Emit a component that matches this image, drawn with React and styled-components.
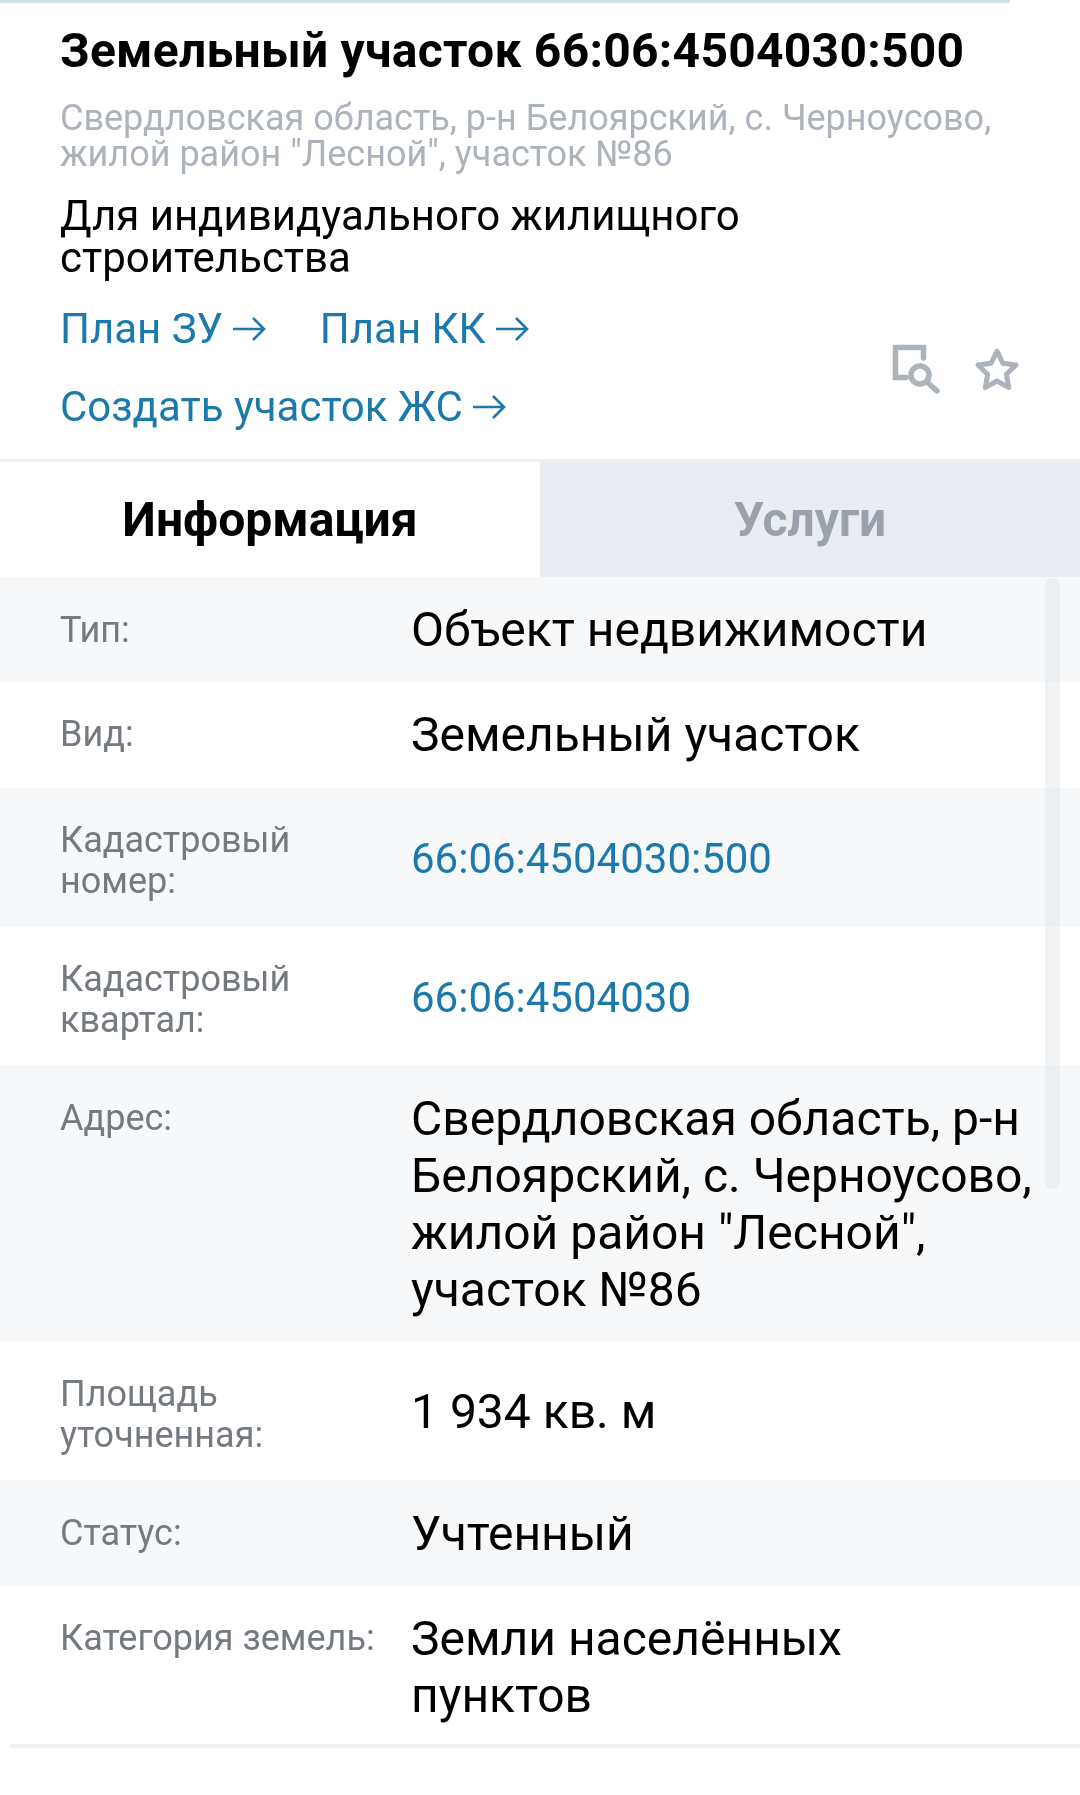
import React from 'react';
import styled, { createGlobalStyle } from 'styled-components';

const GlobalStyle = createGlobalStyle`
  html, body {
    margin: 0;
    padding: 0;
    background: #fff;
  }
  body {
    font-family: Roboto, "Liberation Sans", sans-serif;
    color: #000;
  }
`;

const Page = styled.div`
  position: relative;
  width: 1080px;
  height: 1795px;
  overflow: hidden;
  background: #fff;
  filter: blur(0.5px);
`;

const TopLine = styled.div`
  height: 3px;
  width: 1010px;
  background: #d5e2e8;
`;

const Header = styled.div`
  height: 459px;
  box-sizing: border-box;
  padding: 22px 60px 0;
  border-bottom: 3px solid #eef0f3;
`;

const Title = styled.h1`
  margin: 0;
  font-size: 48px;
  line-height: 52px;
  font-weight: 700;
  letter-spacing: 0.26px;
  white-space: nowrap;
`;

const Address = styled.div`
  margin-top: 23px;
  font-size: 36px;
  line-height: 36px;
  color: #adb3bb;
  white-space: nowrap;
`;

const Purpose = styled.div`
  margin-top: 23px;
  font-size: 42px;
  line-height: 42px;
`;

const HeaderBottom = styled.div`
  display: flex;
  justify-content: space-between;
  align-items: center;
  margin-top: 28px;
`;

const Links = styled.div`
  display: flex;
  flex-wrap: wrap;
  column-gap: 54px;
  row-gap: 34px;
  width: 560px;
`;

const LinkItem = styled.a`
  display: inline-flex;
  align-items: center;
  gap: 9px;
  font-size: 42px;
  line-height: 44px;
  color: #1b79ac;
  white-space: nowrap;
`;

const Actions = styled.div`
  display: flex;
  gap: 33px;
  align-items: center;
  margin-top: 4px;
`;

const Tabs = styled.div`
  display: grid;
  grid-template-columns: 540px 540px;
  height: 115px;
`;

const Tab = styled.div`
  display: flex;
  align-items: center;
  justify-content: center;
  font-size: 48px;
  font-weight: 700;
  background: ${(props) => (props.active ? '#fff' : '#e9ecf1')};
  color: ${(props) => (props.active ? '#000' : '#9aa1ab')};
`;

const Table = styled.div`
  position: relative;
`;

const Row = styled.div`
  display: grid;
  grid-template-columns: 351px 1fr;
  box-sizing: border-box;
  height: ${(props) => props.h}px;
  padding: 0 30px 0 60px;
  background: ${(props) => (props.odd ? '#f6f8fa' : '#fff')};
`;

const Label = styled.div`
  padding-top: ${(props) => props.top}px;
  font-size: 36px;
  line-height: 41px;
  color: #757a80;
  white-space: pre-line;
`;

const Value = styled.div`
  padding-top: ${(props) => props.top}px;
  font-size: 48px;
  line-height: 57px;
  white-space: pre-line;
`;

const NumberLink = styled.div`
  padding-top: ${(props) => props.top}px;
  font-size: 42px;
  line-height: 57px;
  color: #1b79ac;
`;

const ScrollThumb = styled.div`
  position: absolute;
  top: 1px;
  right: 20px;
  width: 15px;
  height: 611px;
  border-radius: 7px;
  background: rgba(225, 228, 233, 0.45);
`;

const BottomLine = styled.div`
  height: 4px;
  margin-left: 10px;
  background: #f1f2f3;
`;

const Arrow = () => (
  <svg width="34" height="26" viewBox="0 0 34 26" fill="none" stroke="#1b79ac" strokeWidth="2.6">
    <path d="M1 13H32M21 2l11 11-11 11" />
  </svg>
);

const SearchDocIcon = () => (
  <svg width="50" height="54" viewBox="0 0 50 54" fill="none" stroke="#adb3bb" strokeWidth="5.5" strokeLinecap="round">
    <path d="M15 34.5H4.5v-30h28V15" />
    <circle cx="29" cy="32" r="9" />
    <path d="M36 39l10 9" />
  </svg>
);

const StarIcon = () => (
  <svg width="46" height="46" viewBox="0 0 46 46" fill="none" stroke="#adb3bb" strokeWidth="5" strokeLinejoin="round">
    <path d="M23 4l5.8 12.2 13.2 1.8-9.6 9.3 2.3 13.3L23 34l-11.7 6.6 2.3-13.3L4 18l13.2-1.8z" />
  </svg>
);

const rows = [
  { h: 105, labelTop: 33, valueTop: 24, label: 'Тип:', value: 'Объект недвижимости' },
  { h: 106, labelTop: 32, valueTop: 24, label: 'Вид:', value: 'Земельный участок' },
  { h: 139, labelTop: 32, valueTop: 42, label: 'Кадастровый\nномер:', link: '66:06:4504030:500' },
  { h: 138, labelTop: 32, valueTop: 42, label: 'Кадастровый\nквартал:', link: '66:06:4504030' },
  {
    h: 276,
    labelTop: 33,
    valueTop: 25,
    label: 'Адрес:',
    value: 'Свердловская область, р-н\nБелоярский, с. Черноусово,\nжилой район "Лесной",\nучасток №86',
  },
  { h: 139, labelTop: 33, valueTop: 42, label: 'Площадь\nуточненная:', value: '1 934 кв. м' },
  { h: 106, labelTop: 33, valueTop: 25, label: 'Статус:', value: 'Учтенный' },
  { h: 158, labelTop: 32, valueTop: 24, label: 'Категория земель:', value: 'Земли населённых\nпунктов' },
];

const App = () => (
  <Page>
    <GlobalStyle />
    <TopLine />
    <Header>
      <Title>Земельный участок 66:06:4504030:500</Title>
      <Address>
        Свердловская область, р-н Белоярский, с. Черноусово,
        <br />
        жилой район "Лесной", участок №86
      </Address>
      <Purpose>
        Для индивидуального жилищного
        <br />
        строительства
      </Purpose>
      <HeaderBottom>
        <Links>
          <LinkItem>План ЗУ <Arrow /></LinkItem>
          <LinkItem>План КК <Arrow /></LinkItem>
          <LinkItem>Создать участок ЖС <Arrow /></LinkItem>
        </Links>
        <Actions>
          <SearchDocIcon />
          <StarIcon />
        </Actions>
      </HeaderBottom>
    </Header>
    <Tabs>
      <Tab active>Информация</Tab>
      <Tab>Услуги</Tab>
    </Tabs>
    <Table>
      {rows.map((row, i) => (
        <Row key={row.label} h={row.h} odd={i % 2 === 0}>
          <Label top={row.labelTop}>{row.label}</Label>
          {row.link ? (
            <NumberLink top={row.valueTop}>{row.link}</NumberLink>
          ) : (
            <Value top={row.valueTop}>{row.value}</Value>
          )}
        </Row>
      ))}
      <ScrollThumb />
    </Table>
    <BottomLine />
  </Page>
);

export default App;
